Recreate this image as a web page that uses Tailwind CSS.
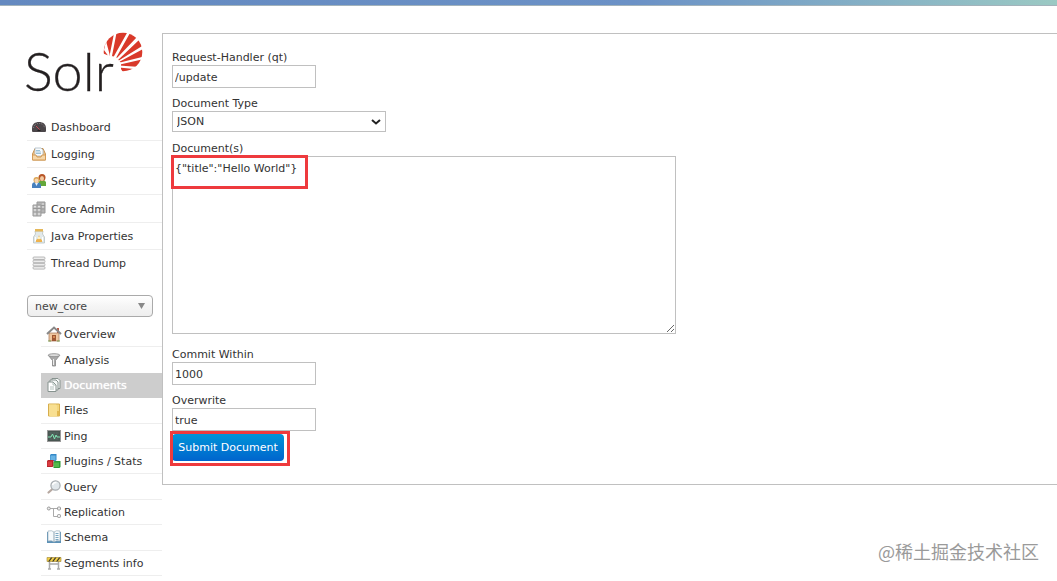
<!DOCTYPE html>
<html lang="en">
<head>
    <meta charset="UTF-8">
    <meta name="viewport" content="width=device-width, initial-scale=1.0">
    <title>Solr Admin</title>
    <script src="https://cdn.jsdelivr.net/npm/@tailwindcss/browser@4"></script>
</head>
<body class="relative bg-white text-[#333] text-[11px] leading-4 font-['DejaVu_Sans',sans-serif]">
    <!-- Top bar -->
    <div class="h-[6px] border-b border-[#a3b3bb] bg-linear-to-r from-[#6489c0] via-[#6b91c6] via-60% to-[#9bc9c3]"></div>

    <div class="flex items-start pt-[27px]">
        <!-- Sidebar -->
        <aside class="w-[162px] shrink-0 pl-[27px]">
            <a href="#" aria-label="Solr" class="block">
                <svg class="block h-[61px] w-[118px] overflow-visible" viewBox="27 33 118 61">
                    <circle cx="123" cy="52" r="19.3" fill="#d9392a"/>
                    <path d="M102 53L107 55L116 57L121 63L121 69L124 74L102 74Z" fill="#fff"/>
                    <path d="M104 50L109 57L109.500 54L106 41ZM109.500 56L112 56L116.500 33L114.300 32ZM113.500 57L116 58L130 33L127.500 32ZM116 59L118 60L139 40L137 37ZM118 61L119 62L144 48.500L143 45.500ZM118 63L120 64.500L144 59L144 56.500ZM119 65.500L119 67.500L139 69.500L140 67Z" fill="#fff"/>
                    <text x="24" y="90.500" font-family="Lato" font-weight="300" font-size="54" fill="#231f20" stroke="#231f20" stroke-width=".3">Solr</text>
                </svg>
            </a>

            <nav aria-label="Main" class="mt-[20px]">
                <ul class="grid h-[163px] auto-rows-fr">
                    <li class="flex border-b border-[#eee]"><a href="#" class="flex items-center gap-1 pl-1">
                        <svg class="size-4" viewBox="0 0 16 16"><path d="M1 9.500C1 5 4 3 8 3s7 2 7 6.500V12q0 1-1 1H2q-1 0-1-1Z" fill="#4b4649"/><path d="M2.500 9C3 5.500 5 4.500 8 4.500s5 1 5.500 4.500" fill="none" stroke="#858083" stroke-dasharray="1 1"/><path d="M5 7l4 4" stroke="#c74c58"/><path d="M6 12q2-3 4 0Z" fill="#222"/></svg>
                        <span class="pt-[2px]">Dashboard</span></a></li>
                    <li class="flex border-b border-[#eee]"><a href="#" class="flex items-center gap-1 pl-1">
                        <svg class="size-4" viewBox="0 0 16 16"><path d="M1.500 8L4 2.500h8L14.500 8v6h-13Z" fill="#edc58f" stroke="#c8924f"/><path d="M4 2h6l2 2v6H4Z" fill="#f8fbfd" stroke="#a1b1bd" stroke-width=".7"/><path d="M5 4.500h4M5 6h5M5 7.500h5" stroke="#83b2cc" stroke-width=".8"/><path d="M1.500 9H5l1 2h4l1-2h3.500v5h-13Z" fill="#f5d7aa" stroke="#d49b57"/></svg>
                        <span class="pt-[2px]">Logging</span></a></li>
                    <li class="flex border-b border-[#eee]"><a href="#" class="flex items-center gap-1 pl-1">
                        <svg class="size-4" viewBox="0 0 16 16"><path d="M8 13V9q0-2 3-2t4 2v4Z" fill="#64a83b"/><circle cx="11" cy="4.500" r="3.500" fill="#b85628"/><ellipse cx="11" cy="5.500" rx="2" ry="2.500" fill="#f2c9a1"/><path d="M1 15v-3q0-3 4-3t5 3v3Z" fill="#4780be"/><path d="M4 10l1.500 3L7 10Z" fill="#e8f3fb"/><circle cx="5.500" cy="7" r="3" fill="#dba657"/><ellipse cx="5.500" cy="7.800" rx="2" ry="2.300" fill="#f7d5b1"/></svg>
                        <span class="pt-[2px]">Security</span></a></li>
                    <li class="flex border-b border-[#eee]"><a href="#" class="flex items-center gap-1 pl-1">
                        <svg class="size-4" viewBox="0 0 16 16"><path d="M6 1h8v11H6Z" fill="#b4b4b4" stroke="#999"/><path d="M2 4h8v11H2Z" fill="#c7c7c7" stroke="#999"/><path d="M2 7.500h8M2 11h8M6 4v11M10 4.500h4M10 8h4" stroke="#999"/><path d="M3 5.500h2M7 5.500h2M3 9h2M7 9h2M3 13h2M7 13h2M11 3h2M11 6h2" stroke="#e4e4e4"/></svg>
                        <span class="pt-[2px]">Core Admin</span></a></li>
                    <li class="flex border-b border-[#eee]"><a href="#" class="flex items-center gap-1 pl-1">
                        <svg class="size-4" viewBox="0 0 16 16"><path d="M4 3h8l-.5 3 2 3v6h-11V9l2-3Z" fill="#e2e9ea" stroke="#b8c2c3" stroke-width=".8"/><path d="M4 1h8v2.500H4Z" fill="#e5b85a"/><path d="M5 12l2-1.500L8 7l1 3.500 2 1.500v2H5Z" fill="#efb34e"/><circle cx="8" cy="10" r="1.200" fill="#fff3c4"/><path d="M4.500 9v4M11.500 9v4" stroke="#fff"/></svg>
                        <span class="pt-[2px]">Java Properties</span></a></li>
                    <li class="flex"><a href="#" class="flex items-center gap-1 pl-1">
                        <svg class="size-4" viewBox="0 0 16 16"><g fill="#ededed" stroke="#aaa" stroke-width=".8"><rect x="2" y="2" width="12" height="2.500" rx="1"/><rect x="2" y="5.200" width="12" height="2.500" rx="1"/><rect x="2" y="8.400" width="12" height="2.500" rx="1"/><rect x="2" y="11.600" width="12" height="2.500" rx="1"/></g></svg>
                        <span class="pt-[2px]">Thread Dump</span></a></li>
                </ul>
            </nav>

            <!-- Core selector -->
            <div class="relative mt-[18px] w-[126px]">
                <select aria-label="Core" class="block h-[22px] w-full appearance-none rounded border border-[#aaa] bg-linear-to-b from-white via-[#f5f5f5] to-[#eee] pt-[2px] pl-[7px] text-[#444]">
                    <option>new_core</option>
                </select>
                <svg class="pointer-events-none absolute top-2 right-2 h-[6px] w-[7px]" viewBox="0 0 7 6"><path d="M0 0h7L3.500 6Z" fill="#888"/></svg>
            </div>

            <nav aria-label="Core" class="mt-[5px] ml-[14px]">
                <ul class="grid h-[254px] auto-rows-fr">
                    <li class="flex border-b border-[#eee]"><a href="#" class="flex items-center gap-[2px] pl-[5px]">
                        <svg class="size-4" viewBox="0 0 16 16"><path d="M3 7h10v8H3Z" fill="#efc7a0" stroke="#ad8465" stroke-width=".8"/><path d="M11 2h2v5h-2Z" fill="#b95c49"/><path d="M1 8L8 1.500 15 8" fill="none" stroke="#888" stroke-width="2"/><path d="M6 9h4v6H6Z" fill="#9d5734"/><path d="M7 10h2v2H7Z" fill="#d68a54"/><path d="M2 15h3M11 15h3" stroke="#80a258"/></svg>
                        <span class="pt-[2px]">Overview</span></a></li>
                    <li class="flex"><a href="#" class="flex items-center gap-[2px] pl-[5px]">
                        <svg class="size-4" viewBox="0 0 16 16"><path d="M2.500 3.500l4 5V14h3V8.500l4-5Z" fill="#aaa" stroke="#858585" stroke-width=".8"/><ellipse cx="8" cy="3.200" rx="5.800" ry="1.500" fill="#ddd" stroke="#888" stroke-width=".8"/><path d="M7.500 7v6" stroke="#eee"/></svg>
                        <span class="pt-[2px]">Analysis</span></a></li>
                    <li class="flex bg-[#cdcdcd] text-white"><a href="#" aria-current="page" class="flex items-center gap-[2px] pl-[5px] text-shadow-[0_0_1px_#fff]">
                        <svg class="size-4" viewBox="0 0 16 16"><path d="M6 1.500h6l2 2v8H6Z" fill="#f4f7f6" stroke="#87938f"/><path d="M4 3h6l2 2v8H4Z" fill="#f4f7f6" stroke="#87938f"/><path d="M2 5h5l3 3v6.500H2Z" fill="#fff" stroke="#87938f"/><path d="M7 5v3h3M4 10h4M4 12h4" fill="none" stroke="#9eb1ab" stroke-width=".8"/></svg>
                        <span class="pt-[2px]">Documents</span></a></li>
                    <li class="flex border-b border-[#eee]"><a href="#" class="flex items-center gap-[2px] pl-[5px]">
                        <svg class="size-4" viewBox="0 0 16 16"><path d="M2.500 2h11v12h-11Z" fill="#f3d67d" stroke="#d6ad4d"/><path d="M3 2.500h7l1 1v11H4L3 13Z" fill="#f8df91"/><path d="M11 9h2.500v5H11Z" fill="#e3b850"/></svg>
                        <span class="pt-[2px]">Files</span></a></li>
                    <li class="flex border-b border-[#eee]"><a href="#" class="flex items-center gap-[2px] pl-[5px]">
                        <svg class="size-4" viewBox="0 0 16 16"><rect x="1.500" y="2.500" width="13" height="11" fill="#485651" stroke="#999"/><path d="M3 5h10M3 8h10M3 11h10M5 4v8M8 4v8M11 4v8" stroke="#62736c" stroke-width=".5"/><path d="M2 9h3l1.500-3 2 5L10 7l1 2h3" fill="none" stroke="#82e5b5"/></svg>
                        <span class="pt-[2px]">Ping</span></a></li>
                    <li class="flex border-b border-[#eee]"><a href="#" class="flex items-center gap-[2px] pl-[5px]">
                        <svg class="size-4" viewBox="0 0 16 16"><path d="M4 2l1-1h5.500v6l-1 1H4Z" fill="#3489c8"/><path d="M4.500 2.500h5v4.500h-5Z" fill="#68b3e4"/><path d="M1 8l1-1h5.500v6l-1 1H1Z" fill="#b8242c"/><path d="M1.500 8.500H6V13H1.500Z" fill="#d93c40"/><path d="M7.500 9l1-1h6v6l-1 1h-6Z" fill="#2d9a36"/><path d="M8 9.500h5V14H8Z" fill="#55b94c"/></svg>
                        <span class="pt-[2px]">Plugins / Stats</span></a></li>
                    <li class="flex border-b border-[#eee]"><a href="#" class="flex items-center gap-[2px] pl-[5px]">
                        <svg class="size-4" viewBox="0 0 16 16"><path d="M6.500 10L2.500 13.500" stroke="#b7a8a0" stroke-width="2.200" stroke-linecap="round"/><circle cx="9.500" cy="6.500" r="4.600" fill="#e1e7eb" stroke="#a7acb0" stroke-width="1.200"/><path d="M6.500 6q1-3 4-2.500" fill="none" stroke="#fff" stroke-width="1.500"/></svg>
                        <span class="pt-[2px]">Query</span></a></li>
                    <li class="flex border-b border-[#eee]"><a href="#" class="flex items-center gap-[2px] pl-[5px]">
                        <svg class="size-4" viewBox="0 0 16 16"><path d="M4 4.500h8M7.500 4.500v8H12" fill="none" stroke="#aaa"/><g fill="#eee" stroke="#999"><circle cx="2.800" cy="4.500" r="1.500"/><rect x="11.500" y="3" width="3" height="3" rx="1"/><rect x="11.500" y="10.500" width="3" height="3" rx="1"/></g></svg>
                        <span class="pt-[2px]">Replication</span></a></li>
                    <li class="flex border-b border-[#eee]"><a href="#" class="flex items-center gap-[2px] pl-[5px]">
                        <svg class="size-4" viewBox="0 0 16 16"><path d="M1 3h14v11H1Z" fill="#5c91b6"/><path d="M2 2q4-1 6 1v10q-2-2-6-1ZM14 2q-4-1-6 1v10q2-2 6-1Z" fill="#f6fafc" stroke="#9db2bf" stroke-width=".7"/><path d="M9.500 4.500h3M9.500 6.500h3M9.500 8.500h3M9.500 10.500h3" stroke="#6f9fbc" stroke-width=".9"/></svg>
                        <span class="pt-[2px]">Schema</span></a></li>
                    <li class="flex border-b border-[#eee]"><a href="#" class="flex items-center gap-[2px] pl-[5px]">
                        <svg class="size-4" viewBox="0 0 16 16"><path d="M3.500 6v8M12.500 6v8M2 14h3M11 14h3M3 9h10" stroke="#aaa" stroke-width="1.500"/><path d="M1 2.500h14v4H1Z" fill="#f2ce45" stroke="#9c8435" stroke-width=".6"/><path d="M2 6.500l3-4h1.500l-3 4ZM6 6.500l3-4h1.500l-3 4ZM10 6.500l3-4h1.500l-3 4Z" fill="#3f3b2c"/></svg>
                        <span class="pt-[2px]">Segments info</span></a></li>
                </ul>
            </nav>
        </aside>

        <!-- Document form -->
        <main class="min-w-0 flex-1 border-y border-l border-[#c0c0c0] pt-[15px] pb-[23px] pl-[9px]">
            <form class="flex flex-col items-start" onsubmit="return false">
                <label for="qt" class="pt-[2px] leading-[14px]">Request-Handler (qt)</label>
                <input id="qt" type="text" value="/update" class="mb-[7px] h-[23px] w-36 border border-[#c0c0c0] px-[2px] pt-[2px]">

                <label for="type" class="pt-[2px] leading-[14px]">Document Type</label>
                <div class="relative mb-2 w-[214px]">
                    <select id="type" class="block h-[21px] w-full appearance-none border border-[#c0c0c0] bg-white pl-1">
                        <option>JSON</option>
                    </select>
                    <svg class="pointer-events-none absolute top-2 right-[5px] h-[6px] w-[10px]" viewBox="0 0 10 6"><path d="M1 1l4 3.500L9 1" fill="none" stroke="#222" stroke-width="2"/></svg>
                </div>

                <label for="document" class="pt-[2px] leading-[14px]">Document(s)</label>
                <div class="relative mb-3 w-[504px] max-w-full">
                    <textarea id="document" class="block h-[178px] w-full border border-[#c0c0c0] px-[2px] py-1">{"title":"Hello World"}</textarea>
                    <div class="pointer-events-none absolute -top-px -left-px h-[34px] w-[137px] border-3 border-[#ee3a3d]"></div>
                </div>

                <label for="commit" class="pt-[2px] leading-[14px]">Commit Within</label>
                <input id="commit" type="text" value="1000" class="mb-[7px] h-[23px] w-36 border border-[#c0c0c0] px-[2px] pt-[2px]">

                <label for="overwrite" class="pt-[2px] leading-[14px]">Overwrite</label>
                <input id="overwrite" type="text" value="true" class="mb-[3px] h-[23px] w-36 border border-[#c0c0c0] px-[2px] pt-[2px]">

                <div class="relative">
                    <button type="submit" class="block h-[27px] w-[112px] rounded-sm bg-linear-to-b from-[#0094d8] to-[#0064cd] whitespace-nowrap text-white">Submit Document</button>
                    <div class="pointer-events-none absolute -top-[3px] -left-[2px] h-[35px] w-[120px] border-3 border-[#ee3a3d]"></div>
                </div>
            </form>
        </main>
    </div>

    <p class="absolute right-[18px] bottom-[13px] text-[18px] leading-6 text-[#9a9a9a] font-['Noto_Sans_CJK_SC',sans-serif]">@稀土掘金技术社区</p>
</body>
</html>
